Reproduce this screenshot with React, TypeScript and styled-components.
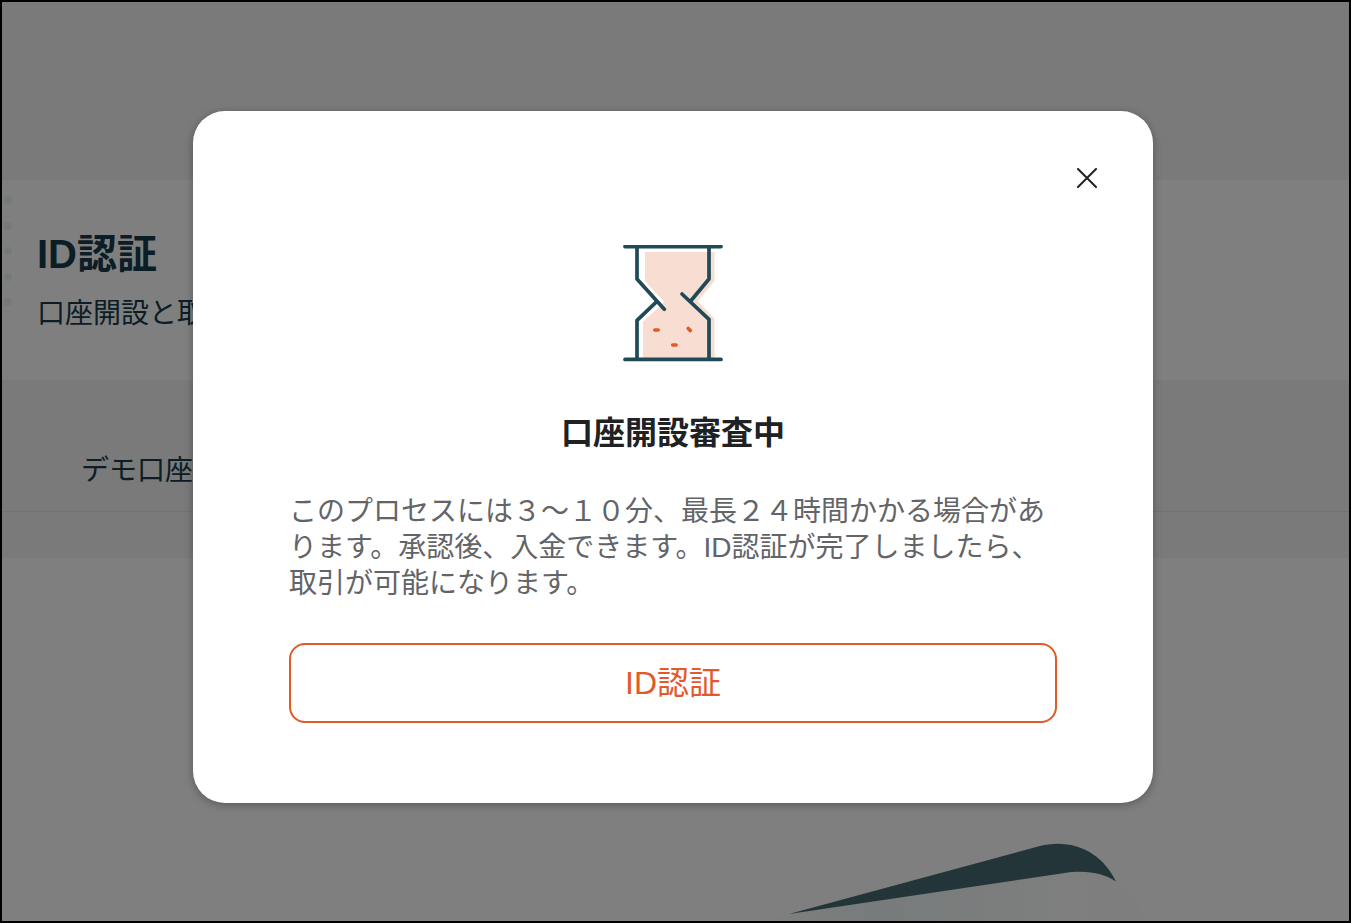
import React from "react";
import styled, { createGlobalStyle } from "styled-components";

const GlobalStyle = createGlobalStyle`
  *, *::before, *::after { box-sizing: border-box; }
  body {
    margin: 0;
    font-family: "Liberation Sans", "Noto Sans CJK JP", sans-serif;
  }
  h1, h2, p { margin: 0; }
`;

const Frame = styled.div`
  position: relative;
  display: flex;
  flex-direction: column;
  min-height: 100vh;
  border: 2px solid #000;
  background: #fff;
  color: #163d4a;
  overflow: hidden;
`;

const TopBand = styled.div`
  height: 178px;
  background: #f4f4f4;
`;

const Intro = styled.section`
  display: flex;
  gap: 25px;
  height: 200px;
  padding: 16px 2px;
`;

const Dots = styled.div`
  display: flex;
  flex-direction: column;
  justify-content: space-between;
  width: 8px;
  height: 110px;
`;

const Dot = styled.span`
  height: 8px;
  border-radius: 50%;
  background: #e8f2f3;
`;

const IntroText = styled.div`
  padding-top: 30px;
`;

const PageTitle = styled.h1`
  font-size: 40px;
  line-height: 56px;
`;

const PageText = styled.p`
  font-size: 28px;
  line-height: 36px;
  margin-top: 14px;
`;

const TabBand = styled.nav`
  height: 178px;
  padding-top: 73px;
  background: #f4f4f4;
`;

const TabRow = styled.div`
  height: 59px;
  padding-left: 79px;
  border-bottom: 1px solid #e4e4e4;
`;

const Tab = styled.a`
  font-size: 28px;
  line-height: 36px;
  color: inherit;
  text-decoration: none;
`;

const Content = styled.section`
  flex: 1;
  display: flex;
  align-items: flex-end;
  justify-content: flex-end;
  padding-right: 189px;
  svg { display: block; }
`;

const Overlay = styled.div`
  position: absolute;
  inset: 0;
  display: flex;
  align-items: center;
  justify-content: center;
  padding: 0 5px 9px 0;
  background: rgba(0, 0, 0, 0.5);
`;

const Dialog = styled.div`
  width: 960px;
  max-width: 100%;
  padding: 0 96px 80px;
  border-radius: 32px;
  background: #fff;
  box-shadow: 0 2px 8px rgba(0, 0, 0, 0.3);
`;

const DialogHeader = styled.header`
  display: flex;
  align-items: center;
  justify-content: flex-end;
  height: 134px;
  margin-right: -48px;
`;

const CloseButton = styled.button`
  display: grid;
  place-items: center;
  width: 36px;
  height: 36px;
  padding: 0;
  border: 0;
  background: none;
  cursor: pointer;
`;

const DialogBody = styled.div`
  display: flex;
  flex-direction: column;
  align-items: center;
`;

const DialogTitle = styled.h2`
  margin-top: 46px;
  font-size: 32px;
  line-height: 48px;
  color: #202122;
`;

const Message = styled.p`
  width: 100%;
  margin-top: 37px;
  font-size: 28px;
  line-height: 36px;
  color: #636468;
`;

const VerifyButton = styled.button`
  width: 100%;
  height: 80px;
  margin-top: 41px;
  border: 2px solid #e2592a;
  border-radius: 16px;
  background: #fff;
  color: #e2592a;
  font-family: inherit;
  font-size: 32px;
  line-height: 48px;
  cursor: pointer;
`;

function Hourglass() {
  return (
    <svg width="100" height="118" viewBox="0 0 100 118" fill="none" aria-hidden="true">
      <path d="M22 7H91.5V36L74.7 56L91.5 73.5V114H20V76.7L41.3 57L22 36Z" fill="#f8ddd3" />
      <g stroke="#1f4a56" strokeWidth="3.7" strokeLinecap="round" strokeLinejoin="round">
        <path d="M2 1.6H98M2 114.4H98" />
        <path d="M14 2V34L41.3 64.2" />
        <path d="M14 114V75.3L33.7 56.7" />
        <path d="M86 2V34L67.7 56" />
        <path d="M86 114V74.3L59 49" />
      </g>
      <path
        d="M31.8 85H35.2M49.7 100H53.1M65.2 83.5L67.4 85.6"
        stroke="#e2592a"
        strokeWidth="3.6"
        strokeLinecap="round"
      />
    </svg>
  );
}

function Wave() {
  return (
    <svg width="420" height="80" viewBox="740 841 420 80" fill="none" aria-hidden="true">
      <defs>
        <linearGradient id="tint" x1="789" y1="0" x2="1150" y2="0" gradientUnits="userSpaceOnUse">
          <stop offset="0" stopColor="#fafcfc" />
          <stop offset="0.25" stopColor="#eff7f7" />
          <stop offset="0.75" stopColor="#fcfefd" />
          <stop offset="1" stopColor="#fffcfc" />
        </linearGradient>
      </defs>
      <path d="M770 921L789 914L1063 873Q1092 869 1116 881Q1139 896 1146 921Z" fill="url(#tint)" />
      <path
        d="M789 914L1038 846.500C1074 837 1103 854 1116 881.5C1103 873 1086 869.500 1063 873.200Z"
        fill="#486a72"
      />
    </svg>
  );
}

export default function App() {
  return (
    <>
      <GlobalStyle />
      <Frame>
        <TopBand />
        <Intro>
          <Dots>
            {[0, 1, 2, 3, 4].map((i) => (
              <Dot key={i} />
            ))}
          </Dots>
          <IntroText>
            <PageTitle>ID認証</PageTitle>
            <PageText>口座開設と取</PageText>
          </IntroText>
        </Intro>
        <TabBand>
          <TabRow>
            <Tab href="#demo">デモ口座</Tab>
          </TabRow>
        </TabBand>
        <Content>
          <Wave />
        </Content>
        <Overlay>
          <Dialog role="dialog" aria-modal="true" aria-labelledby="dialog-title">
            <DialogHeader>
              <CloseButton type="button" aria-label="閉じる">
                <svg width="20" height="20" viewBox="0 0 20 20" aria-hidden="true">
                  <path d="M1 1L19 19M19 1L1 19" stroke="#202122" strokeWidth="2" strokeLinecap="round" />
                </svg>
              </CloseButton>
            </DialogHeader>
            <DialogBody>
              <Hourglass />
              <DialogTitle id="dialog-title">口座開設審査中</DialogTitle>
              <Message>
                このプロセスには３〜１０分、最長２４時間かかる場合があります。承認後、入金できます。ID認証が完了しましたら、取引が可能になります。
              </Message>
              <VerifyButton type="button">ID認証</VerifyButton>
            </DialogBody>
          </Dialog>
        </Overlay>
      </Frame>
    </>
  );
}
